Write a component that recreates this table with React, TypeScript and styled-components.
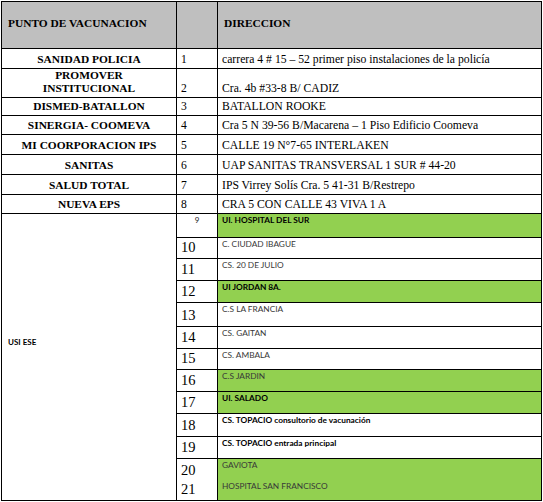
import React from "react";
import styled, { createGlobalStyle } from "styled-components";

const Global = createGlobalStyle`
  html, body { margin: 0; padding: 0; background: #ffffff; }
  body { padding: 1px 0 0 1px; }
`;

const Table = styled.table`
  border-collapse: collapse;
  table-layout: fixed;
  width: 540px;
  border: 1px solid #000;
`;

const Row = styled.tr<{ $h: number }>`
  height: ${(p) => p.$h}px;
`;

const Cell = styled.td`
  border: 1px solid #000;
  padding: 0 4px;
  box-sizing: border-box;
  overflow: hidden;
`;

const HeadCell = styled(Cell)`
  background: #bfbfbf;
  font-family: "Liberation Serif", "Times New Roman", serif;
  font-weight: 700;
  font-size: 11.4px;
  color: #000;
  vertical-align: middle;
  padding: 0 4px 5px 6px;
`;

const PlaceCell = styled(Cell)`
  font-family: "Liberation Serif", "Times New Roman", serif;
  font-weight: 700;
  font-size: 11.4px;
  line-height: 13px;
  text-align: center;
  vertical-align: bottom;
  padding-bottom: 2px;
  color: #000;
`;

const GroupCell = styled(Cell)`
  font-family: Lato, "Noto Sans", sans-serif;
  font-weight: 700;
  font-size: 8px;
  color: #000;
  vertical-align: middle;
  padding: 0 0 30px 6px;
`;

const NumCell = styled(Cell)<{ $big?: boolean }>`
  font-family: "Liberation Serif", "Times New Roman", serif;
  font-size: ${(p) => (p.$big ? 14.5 : 11.6)}px;
  line-height: ${(p) => (p.$big ? 19 : 13)}px;
  vertical-align: bottom;
  padding-bottom: ${(p) => (p.$big ? 1 : 2)}px;
  color: #000;
`;

const SmallNumCell = styled(Cell)`
  font-family: Lato, "Noto Sans", sans-serif;
  font-size: 8px;
  line-height: 11px;
  text-align: center;
  vertical-align: top;
  padding-top: 1px;
  color: #222;
`;

const AddrCell = styled(Cell)`
  font-family: "Liberation Serif", "Times New Roman", serif;
  font-size: 11.7px;
  line-height: 13px;
  vertical-align: bottom;
  padding-bottom: 2px;
  color: #000;
  white-space: nowrap;
`;

const SiteCell = styled(Cell)<{ $green?: boolean; $bold?: boolean }>`
  font-family: Lato, "Noto Sans", sans-serif;
  font-size: 8.3px;
  line-height: 13px;
  font-weight: ${(p) => (p.$bold ? 700 : 400)};
  background: ${(p) => (p.$green ? "#92d050" : "#ffffff")};
  color: ${(p) => (p.$bold ? "#000" : "#383838")};
  vertical-align: top;
  padding: 0 4px;
  white-space: nowrap;
`;

const SiteLines = styled.div`
  display: flex;
  flex-direction: column;
  gap: 8px;
`;

const Line = styled.div``;

type Top = { n: number; place: string[]; addr: string; h: number };

const top: Top[] = [
  { n: 1, place: ["SANIDAD POLICIA"], addr: "carrera 4 # 15 – 52 primer piso instalaciones de la policía", h: 20 },
  { n: 2, place: ["PROMOVER", "INSTITUCIONAL"], addr: "Cra. 4b #33-8 B/ CADIZ", h: 28 },
  { n: 3, place: ["DISMED-BATALLON"], addr: "BATALLON ROOKE", h: 18 },
  { n: 4, place: ["SINERGIA- COOMEVA"], addr: "Cra 5 N 39-56 B/Macarena  – 1 Piso Edificio Coomeva", h: 19 },
  { n: 5, place: ["MI COORPORACION IPS"], addr: "CALLE 19 N°7-65 INTERLAKEN", h: 20 },
  { n: 6, place: ["SANITAS"], addr: "UAP SANITAS TRANSVERSAL 1 SUR # 44-20", h: 20 },
  { n: 7, place: ["SALUD TOTAL"], addr: "IPS Virrey Solís Cra. 5 41-31 B/Restrepo", h: 20 },
  { n: 8, place: ["NUEVA EPS"], addr: "CRA 5 CON CALLE 43 VIVA 1 A", h: 19 },
];

type Site = { n: number[]; lines: string[]; h: number; green?: boolean; bold?: boolean };

const sites: Site[] = [
  { n: [10], lines: ["C. CIUDAD IBAGUE"], h: 21 },
  { n: [11], lines: ["CS. 20 DE JULIO"], h: 22 },
  { n: [12], lines: ["UI JORDAN 8A."], h: 22, green: true, bold: true },
  { n: [13], lines: ["C.S LA FRANCIA"], h: 24 },
  { n: [14], lines: ["CS. GAITAN"], h: 22 },
  { n: [15], lines: ["CS. AMBALA"], h: 21 },
  { n: [16], lines: ["C.S JARDIN"], h: 22, green: true },
  { n: [17], lines: ["UI. SALADO"], h: 22, green: true, bold: true },
  { n: [18], lines: ["CS. TOPACIO consultorio de vacunación"], h: 23, bold: true },
  { n: [19], lines: ["CS. TOPACIO entrada principal"], h: 22, bold: true },
  { n: [20, 21], lines: ["GAVIOTA", "HOSPITAL SAN FRANCISCO"], h: 42, green: true },
];

export default function App() {
  return (
    <>
      <Global />
      <Table>
        <colgroup>
          <col style={{ width: 175 }} />
          <col style={{ width: 41 }} />
          <col style={{ width: 324 }} />
        </colgroup>
        <tbody>
          <Row $h={47}>
            <HeadCell>PUNTO DE VACUNACION</HeadCell>
            <HeadCell />
            <HeadCell>DIRECCION</HeadCell>
          </Row>
          {top.map((r) => (
            <Row key={r.n} $h={r.h}>
              <PlaceCell>
                {r.place.map((l) => (
                  <Line key={l}>{l}</Line>
                ))}
              </PlaceCell>
              <NumCell>{r.n}</NumCell>
              <AddrCell>{r.addr}</AddrCell>
            </Row>
          ))}
          <Row $h={24}>
            <GroupCell rowSpan={12}>USI ESE</GroupCell>
            <SmallNumCell>9</SmallNumCell>
            <SiteCell $green $bold>
              <SiteLines>
                <Line>UI. HOSPITAL DEL SUR</Line>
              </SiteLines>
            </SiteCell>
          </Row>
          {sites.map((s) => (
            <Row key={s.n[0]} $h={s.h}>
              <NumCell $big>
                {s.n.map((n) => (
                  <Line key={n}>{n}</Line>
                ))}
              </NumCell>
              <SiteCell $green={s.green} $bold={s.bold}>
                <SiteLines>
                  {s.lines.map((l) => (
                    <Line key={l}>{l}</Line>
                  ))}
                </SiteLines>
              </SiteCell>
            </Row>
          ))}
        </tbody>
      </Table>
    </>
  );
}
